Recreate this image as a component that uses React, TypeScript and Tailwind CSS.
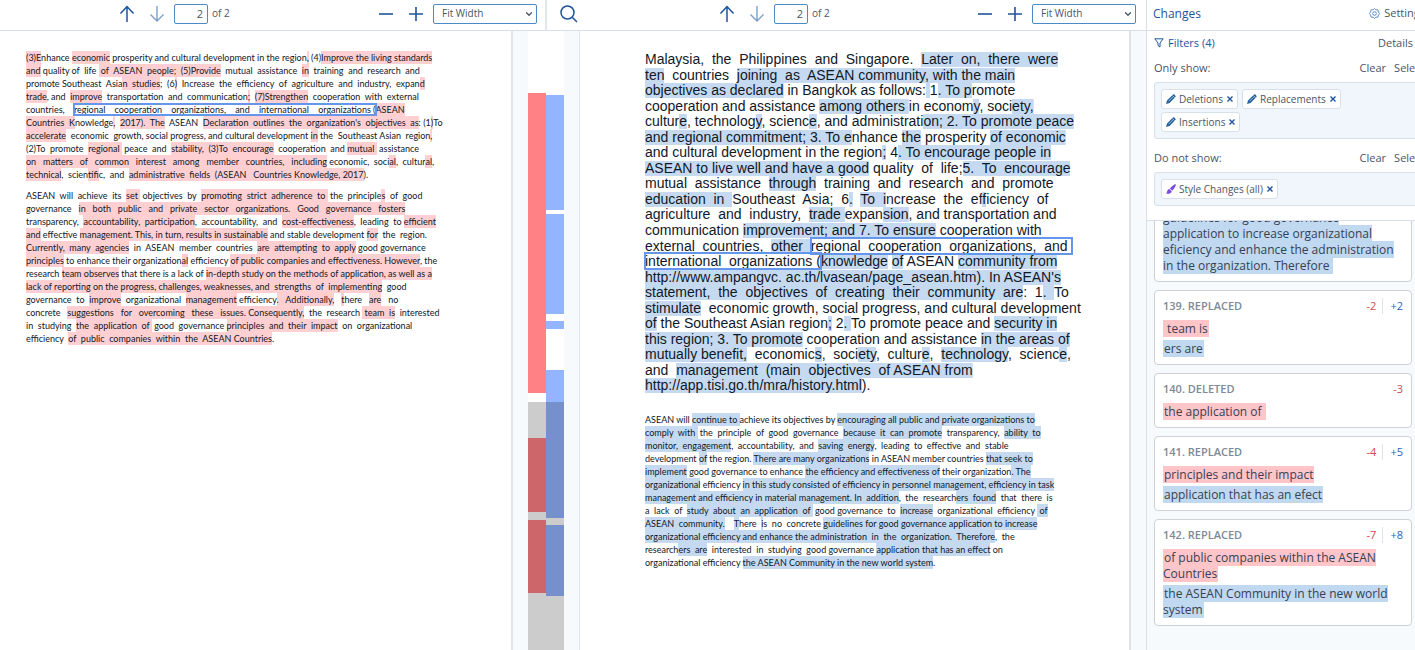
import { ChevronDown } from 'lucide-react';

// [text] is a highlighted change, {text} is the selected match
const leftFirst = [
    '[(3)E]nhance [economic] prosperity and cultural development in the region[,] (4)[Improve the living standards]',
    '[and] quality of  life [ of  ASEAN  people;  (5)Provide]  mutual  assistance  [in]  training  and  research  and',
    'promote Southeast  Asia[n  studies];  (6[)]  Increase  the  efficiency  of  agriculture  and  industry,  expan[d]',
    '[trade], and  [improve]  transportation  and  communication[;]  [(7)Strengthen]  cooperation  with  external',
    'countries,    {regional    cooperation    organizations,    and    international    organizations (}[ASEAN]',
    '[Countries  K]nowledge[,]  [2017).  The]  ASEAN  [Declaration  outlines  the  organization\'s  objectives  as]: (1[)]To',
    '[accelerate]  economic  growth, social progress, and cultural development [in] the  Southeast Asian  region[,]',
    '(2)To  promote  [regional ] peace  and  [stability,  (3)To  encourage]  cooperation  and [mutual ] assistance',
    '[on   matters   of   common   interest   among   member   countries,   including] economic,  soci[al],  cultur[al],',
    '[technical],  scien[tif]ic,  and  [administrative  fields  (ASEAN   Countries Knowledge, 2017]).',
];

const leftSecond = [
    'ASEAN  will  achieve  its  [set ] objectives  by  [promoting  strict  adherence  to ] the  principle[s]  of  good',
    'governance   [in   both   public   and   private   sector   organizations.   Good   governance   fosters]',
    'transparency,  [accountability,  participation],  accountability,  and  [cost-effectiveness],  leading  to [efficient]',
    '[and] effective [management. This, in turn, results in sustainable] and stable development [for]  the  region.',
    '[Currently,  many  agencies]  in  ASEAN  member  countries  [are  attempting  to  apply] good governance',
    '[principles] to enhance their organization[al] efficiency [of public companies and effectiveness. However], the',
    'research [team observes] that there is a lack of [in-depth study on the methods of application, as well as a]',
    '[lack of reporting on the progress, challenges, weaknesses, and  strengths  of  implementing]  good',
    'governance  to  [improve]  organizational  [management] efficiency[.   Additionally,]   [t]here   [are]   no',
    'concrete   [suggestions   for   overcoming   these   issues. Consequently,]  the  research [ team  is]  interested',
    'in  studying  [the  application  of ] good  governance [principles  and  their  impact]  on  organizational',
    'efficiency  [of  public  companies  within  the  ASEAN Countries].',
];

const rightFirst = [
    'Malaysia,  the  Philippines  and  Singapore.  [Later  on,  there  were]',
    '[ten]  countries  [joining  as  ASEAN community, with the main]',
    '[objectives as declared] in Bangkok as follows:[ ]1[. To p]romote',
    'cooperation and assistance [among others ]in econom[y], soci[ety,]',
    'cultur[e], technolog[y], scienc[e], and administrati[on; 2. To promote peace]',
    '[and regional commitment; 3. To e]nhance [the] prosperity [of economic]',
    'and cultural development in the region[;] 4[. To encourage people in]',
    '[ASEAN to live well and have a good] quality  of  life;[5.  To  encourage]',
    'mutual  assistance  [through]  training  and  research  and  promote',
    '[education  in  ]Southeast  Asia;  6[.]  [To  i]ncrease  the  ef[f]iciency  of',
    'agriculture  and  industry,  [trade ]expan[sion], and transportation and',
    'communication [improvement; and 7. To ensure] cooperation with',
    'external  countries,  [other  ]{regional  cooperation  organizations,  and }',
    '{international  organizations (}[knowledge] [of] ASEAN [community from]',
    '[http://www.ampangvc. ac.th/lvasean/page_asean.htm). In ASEAN\'s]',
    '[statement,  the  objectives  of  creating  their  community  are]:  1[.  ]To',
    '[stimulate]  economic growth, social progress, and cultural development',
    '[of] the Southeast Asian region[;] 2[. ]To promote peace and [security in]',
    '[this region; 3. To promote] cooperation and assistance [in the areas of]',
    '[mutually benefit,]  economic[s],  soci[ety],  cultur[e],  [technology],  scienc[e],',
    'and  [management  (main  objectives  of ASEAN from]',
    '[http://app.tisi.go.th/mra/history.html]).',
];

const rightSecond = [
    'ASEAN will [continue to ]achieve its objectives by [encouraging all public and private organizations to]',
    '[comply  with ] the  principle  of  good  governance  [because  it  can  promote]  transparency,  [ability  to]',
    '[monitor,  engagement],  accountability,  and  [saving  energy],  leading  to  effective  and  stable',
    'development [of] the region. [There are many organizations] in ASEAN member countries [that seek to]',
    '[implement] good governance to enhance [the efficiency and effectiveness of] their organization[. The]',
    '[organizational] efficiency [in this study consisted of efficiency in personnel management, efficiency in task]',
    '[management and efficiency in material management. In  addition],  the  research[ers  found]  that  there  is',
    'a  lack  of  [study  about  an  application  of ] good governance  to  [increase]  organizational  efficiency [ of]',
    '[ASEAN  community.]    [T]here  [i]s  no  concrete [guidelines for good governance application to increase]',
    '[organizational efficiency and enhance the administration  in  the  organization.  Therefore],  the',
    'research[ers  are]  interested  in  studying  good governance [application that has an effect] on',
    'organizational efficiency [the ASEAN Community in the new world system].',
];

const changes = [
    { id: 139, kind: 'REPLACED', removed: 2, added: 2, before: '\u00a0team is', after: 'ers are' },
    { id: 140, kind: 'DELETED', removed: 3, before: 'the application of\u00a0' },
    { id: 141, kind: 'REPLACED', removed: 4, added: 5, before: 'principles and their impact', after: 'application that has an efect' },
    { id: 142, kind: 'REPLACED', removed: 7, added: 8, before: 'of public companies within the ASEAN Countries', after: 'the ASEAN Community in the new world system' },
];

// start and end of each change, in percent of the track
const removedMarks = [[10, 58.5], [65.8, 77.7], [79, 90.8]];
const addedMarks = [[10.3, 28.9], [29.6, 45.7], [46.8, 48.2], [54.8, 78.7], [79.8, 91.3]];

const Line = ({ text, mark }: { text: string; mark: string }) => (
    <div className="whitespace-pre">
        {text.split(/(\[[^\]]*\]|\{[^}]*\})/).map((part, i) => {
            if (part.startsWith('[')) return <span key={i} className={mark}>{part.slice(1, -1)}</span>;
            if (part.startsWith('{')) return <span key={i} className="relative outline-2 -outline-offset-1 outline-[#6396ec]">{part.slice(1, -1)}</span>;
            return part;
        })}
    </div>
);

const Toolbar = ({ name }: { name: string }) => (
    <div className="flex items-center w-full">
        <button aria-label="Previous change" className="text-[#1f549c]">
            <svg width="16" height="18" viewBox="0 0 16 18" fill="none" stroke="currentColor" strokeWidth="1.5">
                <path d="M8 17V2M1.500 8.500L8 1.500L14.500 8.500" />
            </svg>
        </button>
        <button aria-label="Next change" className="ml-[14px] text-[#7f9fca]">
            <svg width="16" height="18" viewBox="0 0 16 18" fill="none" stroke="currentColor" strokeWidth="1.4">
                <path d="M8 1V16M1.500 9.500L8 16L14.500 9.500" />
            </svg>
        </button>
        <input
            aria-label={`${name} page`}
            defaultValue="2"
            className="ml-[9px] w-[34px] h-5 border border-[#4b8ac4] rounded-[2px] text-right pr-1 text-[11px] text-gray-600 bg-white"
        />
        <span className="ml-1 text-[10px] text-gray-600">of 2</span>
        <div className="ml-auto flex items-center text-[#1f549c]">
            <button aria-label="Zoom out">
                <svg width="16" height="16" viewBox="0 0 16 16" stroke="currentColor" strokeWidth="1.6"><path d="M1 8H15" /></svg>
            </button>
            <button aria-label="Zoom in" className="ml-[14px]">
                <svg width="16" height="16" viewBox="0 0 16 16" stroke="currentColor" strokeWidth="1.6"><path d="M1 8H15M8 1V15" /></svg>
            </button>
            <div className="relative flex ml-[9px]">
                <select
                    aria-label={`${name} zoom`}
                    className="appearance-none w-[104px] h-5 border border-[#4b8ac4] rounded-[2px] pl-2 text-[10px] text-gray-600 bg-white"
                >
                    <option>Fit Width</option>
                </select>
                <ChevronDown className="absolute right-[3px] top-[5px] text-gray-600 pointer-events-none" size={10} strokeWidth={3} />
            </div>
        </div>
    </div>
);

const Chip = ({ label, brush }: { label: string; brush?: boolean }) => (
    <div className="flex items-center h-5 px-1 bg-white border border-[#d8e0ea] rounded-[3px] text-[10px] text-gray-600">
        {brush ? (
            <svg width="10" height="10" viewBox="0 0 10 10" className="text-[#7c4be0]">
                <path d="M9.700 .3C10.300 1.500 8.500 4.500 6.300 6.700L3.900 4.400C6.200 2 8.800 -.2 9.700 .3ZM3.400 4.900L5.700 7.200C5.200 9.500 2.500 10.200 .1 9.500C1.500 8.800 .6 5.400 3.400 4.900Z" fill="currentColor" />
            </svg>
        ) : (
            <svg width="10" height="10" viewBox="0 0 10 10" className="text-[#1f5f9c]">
                <path d="M7 .6Q7.600 0 8.300 .6L9.400 1.700Q10 2.400 9.400 3L3.500 9L0 10L1 6.500Z" fill="currentColor" />
                <path d="M2.500 7.300L7 2.800M6.300 1.400L8.700 3.800" stroke="white" strokeWidth=".6" />
            </svg>
        )}
        <span className="ml-[3px]">{label}</span>
        <button aria-label={`Remove ${label}`} className="ml-1 text-[#1f549c]">
            <svg width="6" height="6" viewBox="0 0 6 6" stroke="currentColor" strokeWidth="1.4"><path d="M.5 .5L5.500 5.500M5.500 .5L.5 5.500" /></svg>
        </button>
    </div>
);

const FilterHead = ({ label }: { label: string }) => (
    <div className="flex items-center h-5 pr-2 text-[11px] text-gray-600">
        <span>{label}</span>
        <button className="ml-auto">Clear</button>
        <button className="ml-2">Select all</button>
    </div>
);

const Track = ({ marks, color }: { marks: number[][]; color: string }) => (
    <div className="relative flex-1">
        {marks.map(([start, end]) => (
            <div key={start} className={`absolute inset-x-0 ${color}`} style={{ top: `${start}%`, height: `${end - start}%` }} />
        ))}
    </div>
);

const App = () => {
    return (
        <div className="h-screen flex overflow-hidden bg-[#f7fafc] font-['Open_Sans',sans-serif]">
            {/* Documents */}
            <main className="flex-1 min-w-0 flex flex-col">
                <div className="grid grid-cols-[547fr_599fr] h-[31px] shrink-0 border-b border-[#d9dfe8] bg-white">
                    <div className="flex pl-[119px] pr-2 pb-[3px] border-r-2 border-[#e3e7ee]">
                        <Toolbar name="Original" />
                    </div>
                    <div className="flex pl-[13px] pr-[10px] pb-[3px]">
                        <button aria-label="Search" className="text-[#1f549c]">
                            <svg width="18" height="18" viewBox="0 0 18 18" fill="none" stroke="currentColor" strokeWidth="1.5">
                                <circle cx="7.500" cy="7.500" r="6.500" />
                                <path d="M12.200 12.200L17 17" />
                            </svg>
                        </button>
                        <div className="flex flex-1 pl-[141px]">
                            <Toolbar name="Revised" />
                        </div>
                    </div>
                </div>
                <div className="grid grid-cols-[minmax(0,513fr)_66px_minmax(0,552fr)_15px] grid-rows-[minmax(0,1fr)] flex-1 min-h-0">
                    {/* Original page */}
                    <article className="overflow-hidden bg-white border-r-2 border-[#e0e4e8] pl-[26px] pt-5 font-[Lato,sans-serif] text-[9px] leading-[13px] text-gray-900">
                        {leftFirst.map((text) => <Line key={text} text={text} mark="bg-[#ffcfd1] py-px" />)}
                        <div className="mt-2">
                            {leftSecond.map((text) => <Line key={text} text={text} mark="bg-[#ffcfd1] py-px" />)}
                        </div>
                    </article>
                    {/* Overview */}
                    <div className="px-[15px] flex">
                        <div className="relative flex flex-1 bg-white">
                            <Track marks={removedMarks} color="bg-[#ff8085]" />
                            <Track marks={addedMarks} color="bg-[#93b5ff]" />
                            <div className="absolute inset-x-0 bottom-0 top-[60%] bg-black/20" />
                        </div>
                    </div>
                    {/* Revised page */}
                    <article className="overflow-hidden bg-white border-l border-r-2 border-[#e0e4e8] pl-[65px] pt-5 text-gray-900">
                        <div className="grid auto-rows-fr h-[342px] font-['Liberation_Sans',sans-serif] text-sm leading-4">
                            {/* the highlight stops short of the line above, so its underscores stay visible */}
                            {rightFirst.map((text) => (
                                <Line key={text} text={text} mark="bg-[linear-gradient(#c5daf0,#c5daf0)] bg-[length:100%_15px] bg-bottom bg-no-repeat" />
                            ))}
                        </div>
                        <div className="mt-5 font-[Lato,sans-serif] text-[9px] leading-[13px]">
                            {rightSecond.map((text) => <Line key={text} text={text} mark="bg-[#c5daf0] py-px" />)}
                        </div>
                    </article>
                </div>
            </main>

            {/* Changes panel */}
            <aside className="w-[269px] shrink-0 flex flex-col overflow-hidden border-l border-[#d9dfe8]">
                <div className="w-[300px] shrink-0 bg-white border-b border-[#d9dfe8]">
                    <header className="flex items-center h-[31px] pb-[3px] pl-[6px] pr-[22px] border-b border-[#d9dfe8] text-[#1f549c]">
                        <h2 className="text-xs">Changes</h2>
                        <button className="ml-auto flex items-center gap-1 text-[11px] text-gray-600">
                            <svg width="11" height="11" viewBox="0 0 24 24" fill="none" stroke="#4f86c6" strokeWidth="2">
                                <path d="M12 1L15 4H19.500L20.500 8.500L23 12L20.500 15.500L19.500 20H15L12 23L9 20H4.500L3.500 15.500L1 12L3.500 8.500L4.500 4H9Z" />
                                <circle cx="12" cy="12" r="4" />
                            </svg>
                            Settings
                        </button>
                    </header>
                    <div className="pl-[7px] pt-[3px] pb-[14px]">
                        <div className="flex items-center h-[18px] pr-[34px] text-[#1f549c]">
                            <svg width="10" height="10" viewBox="0 0 10 10" fill="none" stroke="currentColor"><path d="M.8 .8H9.200L6 5V9L4 7.500V5Z" /></svg>
                            <span className="ml-1 text-[11px]">Filters (4)</span>
                            <button className="ml-auto text-[11px] text-gray-600">Details</button>
                        </div>
                        <div className="mt-[6px]"><FilterHead label="Only show:" /></div>
                        <div className="mt-1 flex flex-wrap gap-x-1 gap-y-[3px] p-[6px] pr-12 bg-[#f1f6fd] border border-[#d8e0ea] rounded-[3px]">
                            <Chip label="Deletions" />
                            <Chip label="Replacements" />
                            <Chip label="Insertions" />
                        </div>
                        <div className="mt-[9px]"><FilterHead label="Do not show:" /></div>
                        <div className="mt-1 flex p-[6px] bg-[#f1f6fd] border border-[#d8e0ea] rounded-[3px]">
                            <Chip label="Style Changes (all)" brush />
                        </div>
                    </div>
                </div>
                <div className="flex-1 min-h-0 overflow-hidden flex flex-col justify-end gap-2 pl-[7px] pr-[3px] pb-6 text-xs leading-4 text-gray-700">
                    <div className="shrink-0 px-2 py-[7px] bg-white border border-[#cdd2d9] rounded">
                        <span className="bg-[#c0d8f0] pr-1">
                            guidelines for good governance application to increase organizational eficiency and enhance the administration in the organization. Therefore
                        </span>
                    </div>
                    {changes.map((change) => (
                        <div key={change.id} className="shrink-0 px-2 py-[7px] bg-white border border-[#cdd2d9] rounded">
                            <div className="flex items-center h-[15px] mb-2 text-[11px]">
                                <span className="font-semibold text-[#7d8996]">{change.id}. {change.kind}</span>
                                <span className="ml-auto text-[#d04a55]">-{change.removed}</span>
                                {change.added && (
                                    <span className="ml-[6px] pl-[7px] border-l border-[#dfe4ea] text-[#2c62c4]">+{change.added}</span>
                                )}
                            </div>
                            <div><span className="bg-[#ffc5c9] px-px">{change.before}</span></div>
                            {change.after && <div className="mt-1"><span className="bg-[#c0d8f0] px-px">{change.after}</span></div>}
                        </div>
                    ))}
                </div>
            </aside>
        </div>
    );
};

export default App;
